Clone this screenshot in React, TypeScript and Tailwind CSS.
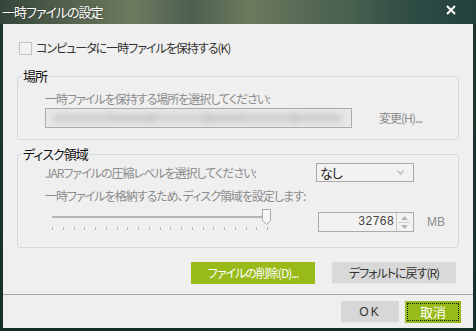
import React from "react";

const font = "font-['Noto_Sans_CJK_JP','Noto_Sans',sans-serif] [font-feature-settings:'palt']";

function Thumb() {
  return (
    <svg width="11" height="18" viewBox="0 0 11 18">
      <path d="M1.5 1.5 H9.5 V12.5 L5.5 16.5 L1.5 12.5 Z" fill="#f7f7f7" stroke="#a9a9a9" strokeWidth="1" />
    </svg>
  );
}

export default function App() {
  const ticks = Array.from({ length: 21 });
  const blobs = [
    [6, 60, 0.45], [64, 44, 0.55], [104, 58, 0.4], [158, 40, 0.55], [196, 54, 0.45], [246, 50, 0.5],
  ];
  return (
    <div className={`w-[476px] h-[331px] overflow-hidden bg-[linear-gradient(180deg,#20352f,#14302c)] ${font}`}>
      <div className="h-[24px] flex items-center justify-between bg-[linear-gradient(90deg,#34463c_0%,#56634e_15%,#6d7a5e_28%,#4d5f50_40%,#6a7a5c_52%,#5a6c55_62%,#47604f_74%,#2f4c45_86%,#24403c_100%)]">
        <span className="pl-[2px] text-[13px] leading-[16px] text-white tracking-[-1px] [text-shadow:0_0_2px_rgba(0,0,0,0.4)]">一時ファイルの設定</span>
        <svg width="10" height="10" viewBox="0 0 10 10" className="mr-[20px] mb-[4px]">
          <path d="M1 1 L9 9 M9 1 L1 9" stroke="#ffffff" strokeWidth="2" />
        </svg>
      </div>
      <div className="mx-[3px] w-[470px] h-[304px] bg-[#efefef] flex flex-col text-[12px] leading-[16px] tracking-[-1px]">
        <div className="pt-[15px] pl-[16px] flex items-center gap-[4px] h-[33px]">
          <div className="w-[13px] h-[13px] border border-[#c4c4c4] bg-[#f1f1f1]" />
          <span className="text-[#333]">コンピュータに一時ファイルを保持する(K)</span>
        </div>

        <div className="mt-[19px] ml-[14px] w-[442px] h-[64px] border border-[#d3dadd] rounded-[3px] relative flex flex-col pl-[27px]">
          <span className="absolute left-[4px] top-[-9px] bg-[#efefef] px-[1px] text-[13px] leading-[16px] text-[#111]">場所</span>
          <div className="mt-[14px] text-[#8c8c8c] h-[16px]">一時ファイルを保持する場所を選択してください:</div>
          <div className="mt-[1px] flex items-center">
            <div className="w-[307px] h-[20px] border border-[#aaaaaa] bg-[#e8e8e8] overflow-hidden relative">
              {blobs.map(([l, w, o], i) => (
                <div
                  key={i}
                  className="absolute top-[5px] h-[8px] bg-[#b0b0b0] blur-[3px]"
                  style={{ left: l, width: w, opacity: o }}
                />
              ))}
            </div>
            <span className="ml-[27px] text-[#8c8c8c]">変更(H)...</span>
          </div>
        </div>

        <div className="mt-[14px] ml-[14px] w-[442px] h-[94px] border border-[#d3dadd] rounded-[3px] relative flex flex-col pl-[27px]">
          <span className="absolute left-[4px] top-[-9px] bg-[#efefef] px-[1px] text-[13px] leading-[16px] text-[#111]">ディスク領域</span>
          <div className="mt-[8px] flex items-center h-[19px]">
            <span className="w-[271px] text-[#8c8c8c]">JARファイルの圧縮レベルを選択してください:</span>
            <div className="w-[98px] h-[19px] border border-[#aaaaaa] bg-[#f2f2f2] flex items-center justify-between pl-[3px] pr-[9px]">
              <span className="text-[#222] text-[13px]">なし</span>
              <svg width="7" height="5" viewBox="0 0 7 5">
                <path d="M0.5 0.5 L3.5 4 L6.5 0.5" stroke="#b9b9b9" fill="none" strokeWidth="1.2" />
              </svg>
            </div>
          </div>
          <div className="mt-[6px] text-[#8c8c8c] h-[16px]">一時ファイルを格納するため、ディスク領域を設定します:</div>
          <div className="mt-[4px] flex items-start">
            <div className="ml-[7px] w-[217px] h-[24px] relative">
              <div className="absolute left-0 top-[8px] w-[213px] h-[2px] bg-[#b4b4b4]" />
              <div className="absolute left-[209px] top-[0px]">
                <Thumb />
              </div>
              <div className="absolute left-0 top-[19px] w-[216px] flex justify-between">
                {ticks.map((_, i) => (
                  <div key={i} className="w-[1px] h-[3px] bg-[#b4b4b4]" />
                ))}
              </div>
            </div>
            <div className="ml-[49px] mt-[4px] w-[96px] h-[20px] border border-[#aaaaaa] bg-[#f2f2f2] flex items-center justify-end">
              <span className="text-[#444] tracking-[0px] pr-[2px] font-['Liberation_Mono',monospace] text-[12px]">32768</span>
              <div className="w-[15px] h-[18px] border-l border-[#c8c8c8] flex flex-col items-center justify-center gap-[2px] mr-[2px]">
                <svg width="7" height="4" viewBox="0 0 7 4"><path d="M0 4 L3.5 0 L7 4 Z" fill="#b5b5b5" /></svg>
                <div className="w-[11px] h-[1px] bg-[#d0d0d0]" />
                <svg width="7" height="4" viewBox="0 0 7 4"><path d="M0 0 L3.5 4 L7 0 Z" fill="#b5b5b5" /></svg>
              </div>
            </div>
            <span className="ml-[13px] mt-[6px] text-[#8c8c8c] tracking-[0px] font-['Liberation_Sans',sans-serif]">MB</span>
          </div>
        </div>

        <div className="mt-[14px] flex h-[22px]">
          <div className="ml-[188px] w-[124px] h-[22px] bg-[#98bb1a] text-white flex items-center justify-center">ファイルの削除(D)...</div>
          <div className="ml-[17px] w-[124px] h-[22px] bg-[#d9d9d9] border-b border-[#e6e6e6] text-[#333] flex items-center justify-center">デフォルトに戻す(R)</div>
        </div>

        <div className="mt-[10px] h-[1px] bg-[#a6a6a6]" />

        <div className="mt-[6px] flex h-[22px]">
          <div className="ml-[338px] w-[58px] h-[22px] bg-[#d7d7d7] border-b border-[#e6e6e6] text-[#333] flex items-center justify-center font-['Liberation_Sans',sans-serif] tracking-[2px]">OK</div>
          <div className="ml-[6px] w-[56px] h-[22px] bg-[#98bb1a] p-[2px]">
            <div className="w-full h-full border border-dotted border-[#111] text-white flex items-center justify-center text-[13px] tracking-[0px]">取消</div>
          </div>
        </div>
      </div>
    </div>
  );
}
